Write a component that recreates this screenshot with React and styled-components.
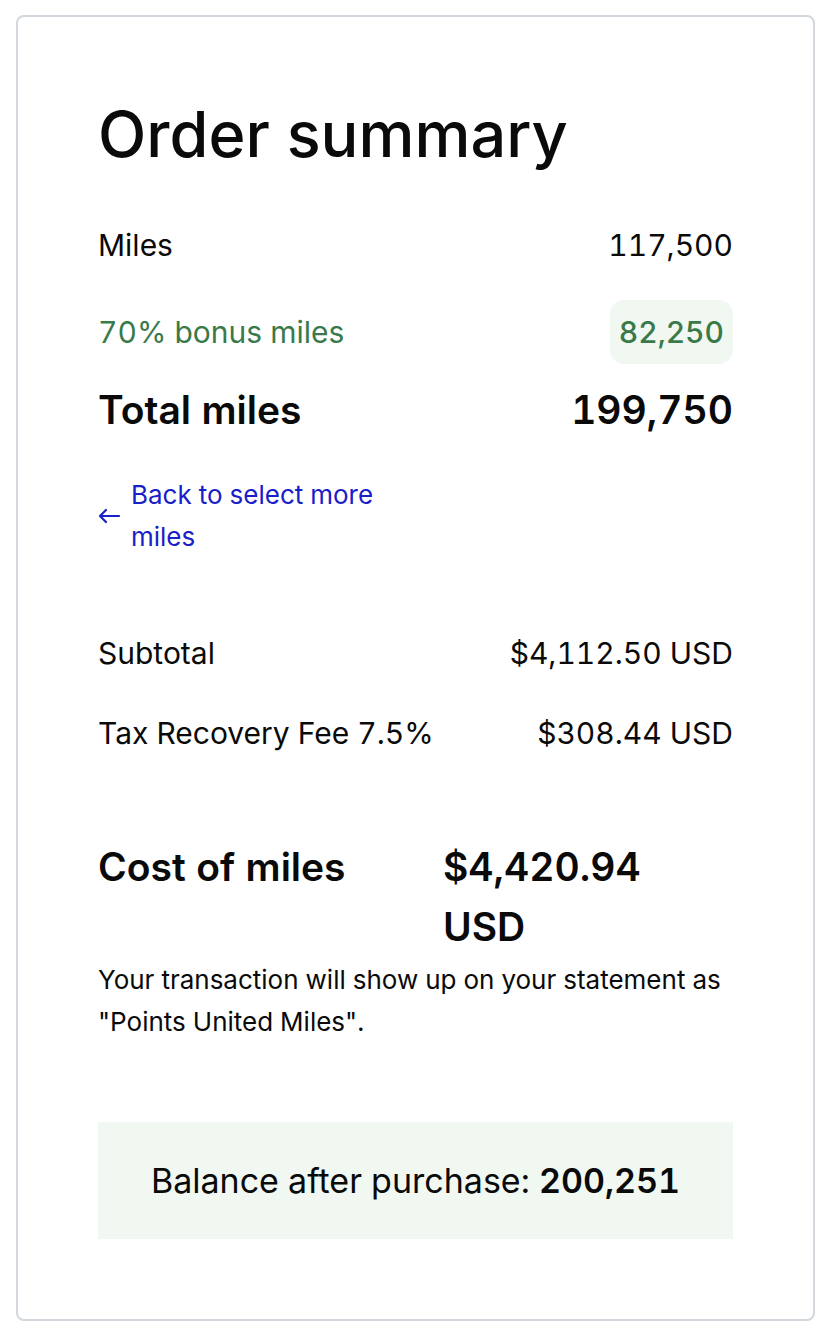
import React from "react";
import styled, { createGlobalStyle } from "styled-components";

const Global = createGlobalStyle`
  html, body { margin: 0; padding: 0; background: #ffffff; }
  body { font-family: Inter, "Noto Sans", "Liberation Sans", sans-serif; color: #0a0a0a; }
  * { box-sizing: border-box; }
`;

const Page = styled.div`
  padding: 15px 15px 14px 16px;
`;

const Card = styled.section`
  border: 2px solid #d3d7de;
  border-radius: 8px;
  padding: 80px;
  display: flex;
  flex-direction: column;
  font-variant-numeric: tabular-nums;
`;

const Title = styled.h1`
  margin: 0 0 42px;
  font-size: 63px;
  line-height: 74px;
  font-weight: 500;
  letter-spacing: 0;
`;

const Rows = styled.div`
  display: flex;
  flex-direction: column;
  gap: 23px;
`;

const Row = styled.div`
  display: flex;
  justify-content: space-between;
  align-items: center;
  min-height: ${(p) => p.$h || 42}px;
  font-size: ${(p) => (p.$big ? 39 : 30)}px;
  line-height: ${(p) => (p.$big ? 46 : 42)}px;
  font-weight: ${(p) => (p.$big ? 600 : 400)};
  color: ${(p) => (p.$green ? "#3a7a4a" : "#0a0a0a")};
`;

const Chip = styled.span`
  background: #f1f8f2;
  border-radius: 14px;
  padding: 11px 9px;
  font-weight: 500;
`;

const BackLink = styled.a`
  margin-top: 41px;
  display: flex;
  align-items: center;
  gap: 10px;
  max-width: 318px;
  color: #1a20c8;
  font-size: 26px;
  line-height: 42px;
  text-decoration: none;
  cursor: pointer;
`;

const Arrow = styled.svg`
  flex: none;
  width: 23px;
  height: 16px;
`;

const FeeList = styled.div`
  margin-top: 74px;
  display: flex;
  flex-direction: column;
  gap: 38px;
`;

const CostGrid = styled.div`
  margin-top: 83px;
  display: grid;
  grid-template-columns: 345px 1fr;
  align-items: start;
  font-size: 39px;
  line-height: 60px;
  font-weight: 600;
`;

const CostValue = styled.span`
  max-width: 250px;
`;

const Note = styled.p`
  margin: 2px 0 0;
  font-size: 26px;
  line-height: 42px;
`;

const Balance = styled.div`
  margin-top: 79px;
  height: 117px;
  background: #f1f8f2;
  display: flex;
  align-items: center;
  justify-content: center;
  font-size: 34px;
  line-height: 42px;
  strong { font-weight: 600; }
`;

export default function App() {
  return (
    <Page>
      <Global />
      <Card>
        <Title>Order summary</Title>
        <Rows>
          <Row $h={64}>
            <span>Miles</span>
            <span>117,500</span>
          </Row>
          <Row $h={64} $green>
            <span>70% bonus miles</span>
            <Chip>82,250</Chip>
          </Row>
          <Row $big $h={46}>
            <span>Total miles</span>
            <span>199,750</span>
          </Row>
        </Rows>
        <BackLink>
          <Arrow viewBox="0 0 23 16" fill="none" stroke="currentColor" strokeWidth="2.2" strokeLinecap="round" strokeLinejoin="round">
            <path d="M2 8h19M8 2L2 8l6 6" />
          </Arrow>
          <span>Back to select more miles</span>
        </BackLink>
        <FeeList>
          <Row>
            <span>Subtotal</span>
            <span>$4,112.50 USD</span>
          </Row>
          <Row>
            <span>Tax Recovery Fee 7.5%</span>
            <span>$308.44 USD</span>
          </Row>
        </FeeList>
        <CostGrid>
          <span>Cost of miles</span>
          <CostValue>$4,420.94 USD</CostValue>
        </CostGrid>
        <Note>Your transaction will show up on your statement as "Points United Miles".</Note>
        <Balance>
          <span>
            Balance after purchase: <strong>200,251</strong>
          </span>
        </Balance>
      </Card>
    </Page>
  );
}
